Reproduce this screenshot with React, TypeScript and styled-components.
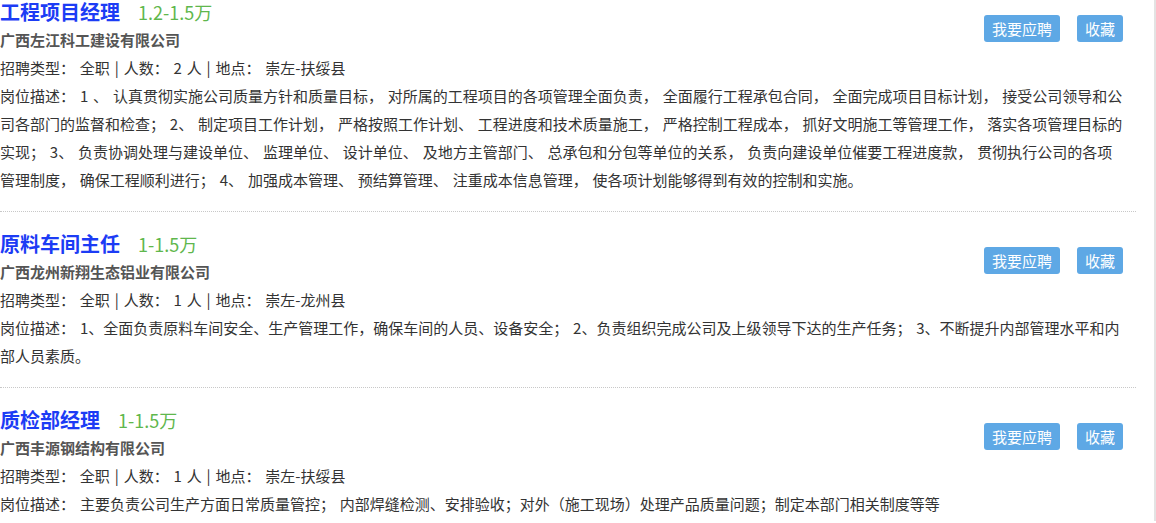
import styled, { createGlobalStyle } from "styled-components";

type Job = {
  id: number;
  title: string;
  salary: string;
  company: string;
  count: number;
  place: string;
  description: string;
};

const jobs: Job[] = [
  {
    id: 1,
    title: "工程项目经理",
    salary: "1.2-1.5万",
    company: "广西左江科工建设有限公司",
    count: 2,
    place: "崇左-扶绥县",
    description:
      "1 、 认真贯彻实施公司质量方针和质量目标， 对所属的工程项目的各项管理全面负责， 全面履行工程承包合同， 全面完成项目目标计划， 接受公司领导和公司各部门的监督和检查； 2、 制定项目工作计划， 严格按照工作计划、 工程进度和技术质量施工， 严格控制工程成本， 抓好文明施工等管理工作， 落实各项管理目标的实现； 3、 负责协调处理与建设单位、 监理单位、 设计单位、 及地方主管部门、 总承包和分包等单位的关系， 负责向建设单位催要工程进度款， 贯彻执行公司的各项管理制度， 确保工程顺利进行； 4、 加强成本管理、 预结算管理、 注重成本信息管理， 使各项计划能够得到有效的控制和实施。",
  },
  {
    id: 2,
    title: "原料车间主任",
    salary: "1-1.5万",
    company: "广西龙州新翔生态铝业有限公司",
    count: 1,
    place: "崇左-龙州县",
    description:
      "1、全面负责原料车间安全、生产管理工作，确保车间的人员、设备安全； 2、负责组织完成公司及上级领导下达的生产任务； 3、不断提升内部管理水平和内部人员素质。",
  },
  {
    id: 3,
    title: "质检部经理",
    salary: "1-1.5万",
    company: "广西丰源钢结构有限公司",
    count: 1,
    place: "崇左-扶绥县",
    description:
      "主要负责公司生产方面日常质量管控； 内部焊缝检测、安排验收；对外（施工现场）处理产品质量问题；制定本部门相关制度等等",
  },
];

const GlobalStyle = createGlobalStyle`
  html, body {
    margin: 0;
    padding: 0;
    background: #ffffff;
    overflow: hidden;
  }
  body {
    font-family: "Microsoft YaHei", "Noto Sans CJK SC", "Liberation Sans", sans-serif;
    font-size: 15px;
    color: #333333;
  }
`;

const Page = styled.div`
  width: 1154px;
  height: 523px;
  border-right: 2px solid #e3e3e3;
  margin-top: -2px;
`;

const List = styled.ul`
  list-style: none;
  margin: 0;
  padding: 0;
  width: 1136px;
`;

const Item = styled.li`
  display: flow-root;
  padding: 18px 0 17px;
  border-bottom: 1px dotted #c8c8c8;

  &:first-child {
    padding-top: 0;
  }
`;

const TitleRow = styled.div`
  display: flex;
  align-items: baseline;
  gap: 18px;
  height: 28px;
  line-height: 28px;
`;

const Title = styled.h3`
  margin: 0;
  font-size: 20px;
  font-weight: bold;
  color: #1c3cf5;
`;

const Salary = styled.span`
  font-size: 18px;
  color: #5fb74d;
`;

const Company = styled.p`
  margin: 0;
  font-size: 15px;
  font-weight: bold;
  color: #555555;
  line-height: 28px;
`;

const Line = styled.p`
  margin: 0;
  line-height: 28px;
  color: #333333;
  word-spacing: 1.5px;
`;

const Description = styled(Line)`
  max-width: 1125px;
`;

const Actions = styled.div`
  float: right;
  display: flex;
  gap: 17px;
  margin-top: 17px;
  margin-right: 13px;
`;

const ActionButton = styled.button`
  height: 27px;
  padding: 0 8px;
  border: none;
  border-radius: 3px;
  background: #5ea8e5;
  color: #ffffff;
  font-family: inherit;
  font-size: 15px;
  line-height: 27px;
  cursor: pointer;
`;

export default function App() {
  return (
    <Page>
      <GlobalStyle />
      <List>
        {jobs.map((job) => (
          <Item key={job.id}>
            <Actions>
              <ActionButton>我要应聘</ActionButton>
              <ActionButton>收藏</ActionButton>
            </Actions>
            <TitleRow>
              <Title>{job.title}</Title>
              <Salary>{job.salary}</Salary>
            </TitleRow>
            <Company>{job.company}</Company>
            <Line>
              招聘类型： 全职 | 人数： {job.count} 人 | 地点： {job.place}
            </Line>
            <Description>岗位描述： {job.description}</Description>
          </Item>
        ))}
      </List>
    </Page>
  );
}
